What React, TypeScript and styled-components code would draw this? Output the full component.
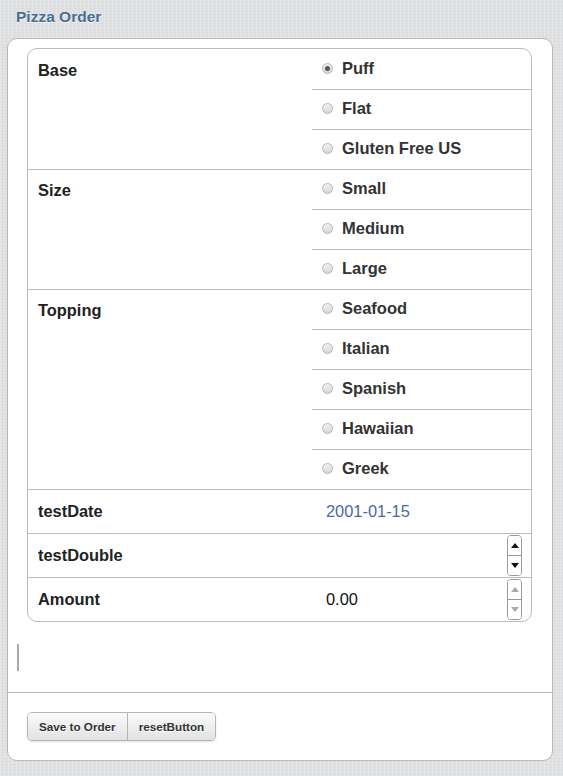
import React from "react";
import styled, { createGlobalStyle } from "styled-components";

const GlobalStyle = createGlobalStyle`
  html, body {
    margin: 0;
    padding: 0;
  }
  body {
    font-family: "Liberation Sans", Arial, Helvetica, sans-serif;
    background-color: #e0e1e3;
    background-image:
      repeating-linear-gradient(90deg, rgba(255,255,255,0.18) 0px, rgba(255,255,255,0.18) 1px, transparent 1px, transparent 4px),
      repeating-linear-gradient(0deg, rgba(0,0,0,0.025) 0px, rgba(0,0,0,0.025) 1px, transparent 1px, transparent 3px);
    min-height: 776px;
  }
`;

const Page = styled.div`
  display: flex;
  flex-direction: column;
  padding-bottom: 16px;
`;

const Title = styled.h1`
  margin: 0;
  height: 38px;
  padding-left: 16px;
  display: flex;
  align-items: center;
  font-size: 15.5px;
  font-weight: bold;
  color: #4a6e94;
  text-shadow: 0 1px 0 rgba(255, 255, 255, 0.7);
  box-sizing: border-box;
  padding-bottom: 4px;
`;

const Card = styled.div`
  margin: 0 10px 0 7px;
  background: #fff;
  border: 1px solid #b8b8b8;
  border-radius: 10px;
  display: flex;
  flex-direction: column;
`;

const Content = styled.div`
  padding: 9px 20px 0 19px;
  display: flex;
  flex-direction: column;
`;

const Table = styled.div`
  border: 1px solid #bcbcbc;
  border-radius: 10px;
  overflow: hidden;
  display: flex;
  flex-direction: column;
`;

const Row = styled.div<{ $first?: boolean; $height?: number }>`
  display: grid;
  grid-template-columns: 284px 1fr;
  border-top: ${(p) => (p.$first ? "none" : "1px solid #bcbcbc")};
  padding-top: ${(p) => (p.$first ? "1px" : "0")};
  min-height: ${(p) => (p.$height ? `${p.$height}px` : "auto")};
  box-sizing: border-box;
`;

const Label = styled.div<{ $center?: boolean }>`
  padding: ${(p) => (p.$center ? "0 10px" : "11px 10px 0")};
  display: flex;
  align-items: ${(p) => (p.$center ? "center" : "flex-start")};
  font-size: 16.4px;
  font-weight: bold;
  color: #222;
`;

const Options = styled.div`
  display: flex;
  flex-direction: column;
`;

const Option = styled.label<{ $first?: boolean }>`
  height: ${(p) => (p.$first ? "39px" : "40px")};
  box-sizing: border-box;
  border-top: ${(p) => (p.$first ? "none" : "1px solid #bcbcbc")};
  display: flex;
  align-items: center;
  padding-left: 10px;
  padding-bottom: 2px;
  gap: 9px;
  font-size: 16.5px;
  font-weight: bold;
  color: #333;
  cursor: pointer;
`;

const Radio = styled.span<{ $checked?: boolean }>`
  width: 11px;
  height: 11px;
  flex-shrink: 0;
  box-sizing: border-box;
  border-radius: 50%;
  border: 1px solid #b5b5b5;
  background: linear-gradient(#f2f2f2, #d6d6d6);
  display: flex;
  align-items: center;
  justify-content: center;
  &::after {
    content: "";
    width: 5px;
    height: 5px;
    border-radius: 50%;
    background: ${(p) => (p.$checked ? "#555" : "transparent")};
  }
`;

const Value = styled.div<{ $link?: boolean }>`
  display: flex;
  align-items: center;
  justify-content: space-between;
  padding: 0 9px 0 14px;
  font-size: 16.4px;
  color: ${(p) => (p.$link ? "#4b68a6" : "#111")};
`;

const Spinner = styled.div`
  width: 15px;
  height: 41px;
  box-sizing: border-box;
  border: 1px solid #999;
  border-radius: 4px;
  display: flex;
  flex-direction: column;
  margin-left: auto;
  overflow: hidden;
`;

const SpinHalf = styled.div<{ $bottom?: boolean }>`
  flex: 1;
  display: flex;
  align-items: center;
  justify-content: center;
  border-top: ${(p) => (p.$bottom ? "1px solid #999" : "none")};
  background: #fff;
`;

const Arrow = styled.span<{ $down?: boolean; $disabled?: boolean }>`
  width: 0;
  height: 0;
  border-left: 4px solid transparent;
  border-right: 4px solid transparent;
  ${(p) =>
    p.$down
      ? `border-top: 5px solid ${p.$disabled ? "#aaa" : "#111"};`
      : `border-bottom: 5px solid ${p.$disabled ? "#aaa" : "#111"};`}
`;

const TextArea = styled.div`
  margin: 22px 0 0 -10px;
  height: 27px;
  width: 2px;
  background: #aaa;
`;

const Footer = styled.div`
  margin-top: 21px;
  border-top: 1px solid #b8b8b8;
  padding: 19px 19px 19px 19px;
  display: flex;
`;

const ButtonGroup = styled.div`
  display: flex;
  border: 1px solid #b5b5b5;
  border-radius: 5px;
  overflow: hidden;
  box-shadow: 0 1px 2px rgba(0, 0, 0, 0.12);
`;

const Button = styled.button<{ $last?: boolean }>`
  height: 27px;
  padding: 0 11px;
  border: none;
  border-left: ${(p) => (p.$last ? "1px solid #b5b5b5" : "none")};
  background: linear-gradient(#fafafa, #e2e2e2);
  font-family: "Liberation Sans", Arial, sans-serif;
  font-size: 11.7px;
  font-weight: bold;
  color: #333;
  text-shadow: 0 1px 0 #fff;
  cursor: pointer;
`;

type Group = { label: string; options: string[]; checked?: number };

const groups: Group[] = [
  { label: "Base", options: ["Puff", "Flat", "Gluten Free US"], checked: 0 },
  { label: "Size", options: ["Small", "Medium", "Large"] },
  { label: "Topping", options: ["Seafood", "Italian", "Spanish", "Hawaiian", "Greek"] },
];

const NumberSpinner = ({ disabled }: { disabled?: boolean }) => (
  <Spinner>
    <SpinHalf>
      <Arrow $disabled={disabled} />
    </SpinHalf>
    <SpinHalf $bottom>
      <Arrow $down $disabled={disabled} />
    </SpinHalf>
  </Spinner>
);

export default function App() {
  return (
    <>
      <GlobalStyle />
      <Page>
        <Title>Pizza Order</Title>
        <Card>
          <Content>
            <Table>
              {groups.map((g, gi) => (
                <Row key={g.label} $first={gi === 0}>
                  <Label>{g.label}</Label>
                  <Options>
                    {g.options.map((o, oi) => (
                      <Option key={o} $first={oi === 0}>
                        <Radio $checked={g.checked === oi} />
                        {o}
                      </Option>
                    ))}
                  </Options>
                </Row>
              ))}
              <Row $height={44}>
                <Label $center>testDate</Label>
                <Value $link>2001-01-15</Value>
              </Row>
              <Row $height={44}>
                <Label $center>testDouble</Label>
                <Value>
                  <span />
                  <NumberSpinner />
                </Value>
              </Row>
              <Row $height={44}>
                <Label $center>Amount</Label>
                <Value>
                  <span>0.00</span>
                  <NumberSpinner disabled />
                </Value>
              </Row>
            </Table>
            <TextArea />
          </Content>
          <Footer>
            <ButtonGroup>
              <Button>Save to Order</Button>
              <Button $last>resetButton</Button>
            </ButtonGroup>
          </Footer>
        </Card>
      </Page>
    </>
  );
}
